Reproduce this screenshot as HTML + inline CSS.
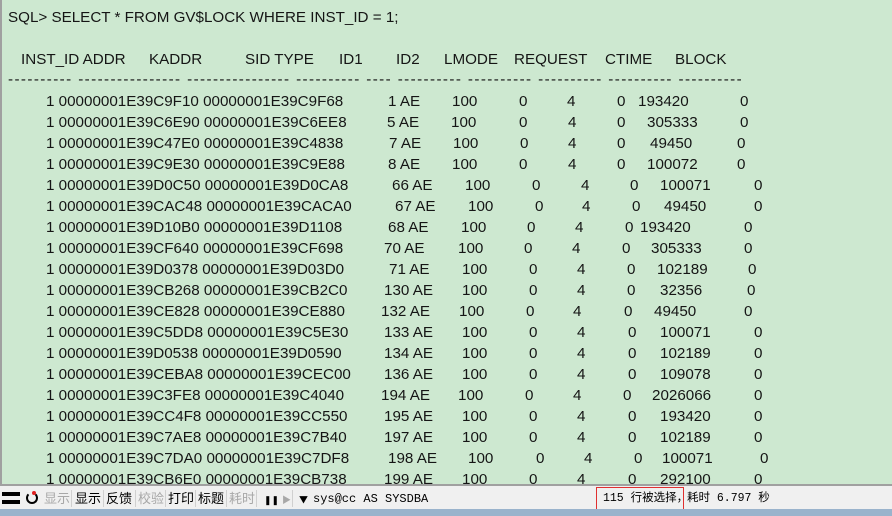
<!DOCTYPE html>
<html><head><meta charset="utf-8"><style>
*{margin:0;padding:0}
body{width:892px;height:516px;overflow:hidden;background:#f0f0f0;position:relative;font-family:"Liberation Sans","Noto Sans CJK SC",sans-serif}
#main{position:absolute;left:0;top:0;width:892px;height:486px;background:#cde8d0;border-left:2px solid #a0a0a0;border-bottom:2px solid #a0a0a0;box-sizing:border-box;overflow:hidden}
.t{position:absolute;font-size:15.2px;color:#151515;white-space:pre;line-height:18px}
#bar{position:absolute;left:0;top:487px;width:892px;height:22px;background:#f0f0f0;font-size:13px;font-family:"Noto Sans CJK SC",sans-serif}
#bar span{position:absolute;top:3px;line-height:16px;white-space:pre}
.g{color:#a8a8a8}
.sep{position:absolute;top:3px;width:1px;height:17px;background:#d0d0d0}
.mono{font-family:"Liberation Mono","Noto Sans CJK SC",monospace;font-size:12px}
#blue{position:absolute;left:0;top:509px;width:892px;height:7px;background:#9ab3cc}
</style></head><body>
<div id="main"></div>
<div id="bar">
 <div style="position:absolute;left:2px;top:5px;width:18px;height:4px;background:#000"></div>
 <div style="position:absolute;left:2px;top:13px;width:18px;height:4px;background:#000"></div>
 <div style="position:absolute;left:26px;top:5px;width:8px;height:8px;border:2px solid #000;border-radius:50%;border-top-color:transparent"></div>
 <div style="position:absolute;left:32px;top:4px;width:4px;height:4px;background:#e02020;border-radius:50%"></div>
 <span class="g" style="left:44px">显示</span>
 <div class="sep" style="left:71px"></div>
 <span style="left:75px">显示</span>
 <div class="sep" style="left:103px"></div>
 <span style="left:106px">反馈</span>
 <div class="sep" style="left:135px"></div>
 <span class="g" style="left:138px">校验</span>
 <div class="sep" style="left:165px"></div>
 <span style="left:168px">打印</span>
 <div class="sep" style="left:195px"></div>
 <span style="left:198px">标题</span>
 <div class="sep" style="left:226px"></div>
 <span class="g" style="left:229px">耗时</span>
 <div class="sep" style="left:256px"></div>
 <span style="left:264px;font-size:9px;top:5px">❚❚</span>
 <span class="g" style="left:282px;font-size:9px;top:5px">▶</span>
 <div class="sep" style="left:292px"></div>
 <span style="left:299px;font-size:9px;top:5px">▼</span>
 <span class="mono" style="left:313px;top:4px">sys@cc AS SYSDBA</span>
 <div style="position:absolute;left:596px;top:0;width:88px;height:25px;border:1px solid #e03030;box-sizing:border-box"></div>
 <span class="mono" style="left:603px;top:4px;font-size:11.5px">115 行被选择，</span>
 <span class="mono" style="left:687px;top:4px;font-size:11.5px">耗时 6.797 秒</span>
</div>
<div id="blue"></div>
<script>
var m=document.getElementById('main');
function T(x,y,s,ls){var d=document.createElement('div');d.className='t';d.style.left=x+'px';d.style.top=(y-7)+'px';d.textContent=s;if(ls)d.style.letterSpacing=ls;m.appendChild(d);return d;}
T(6,16,'SQL> SELECT * FROM GV$LOCK WHERE INST_ID = 1;');
[[19,'INST_ID ADDR'],[147,'KADDR'],[243,'SID TYPE'],[337,'ID1'],[394,'ID2'],[442,'LMODE'],[512,'REQUEST'],[603,'CTIME'],[673,'BLOCK']].forEach(function(a){T(a[0],58,a[1]);});
T(6,78,'---------- ---------------- ---------------- ---------- ---- ---------- ---------- ---------- ---------- ----------','1.4px');
var R=[
['00000001E39C9F10','00000001E39C9F68','1 AE',386,450,517,565,615,'193420',636,738],
['00000001E39C6E90','00000001E39C6EE8','5 AE',385,449,517,566,615,'305333',645,738],
['00000001E39C47E0','00000001E39C4838','7 AE',387,451,518,566,615,'49450',648,735],
['00000001E39C9E30','00000001E39C9E88','8 AE',386,450,517,566,615,'100072',645,735],
['00000001E39D0C50','00000001E39D0CA8','66 AE',390,463,530,579,628,'100071',658,752],
['00000001E39CAC48','00000001E39CACA0','67 AE',393,466,533,580,630,'49450',662,752],
['00000001E39D10B0','00000001E39D1108','68 AE',386,459,525,573,623,'193420',638,742],
['00000001E39CF640','00000001E39CF698','70 AE',382,456,522,570,620,'305333',649,742],
['00000001E39D0378','00000001E39D03D0','71 AE',387,460,527,575,625,'102189',655,746],
['00000001E39CB268','00000001E39CB2C0','130 AE',382,460,527,575,625,'32356',658,745],
['00000001E39CE828','00000001E39CE880','132 AE',379,457,524,571,622,'49450',652,742],
['00000001E39C5DD8','00000001E39C5E30','133 AE',382,460,527,575,626,'100071',658,752],
['00000001E39D0538','00000001E39D0590','134 AE',382,460,527,575,626,'102189',658,752],
['00000001E39CEBA8','00000001E39CEC00','136 AE',382,460,527,575,626,'109078',658,752],
['00000001E39C3FE8','00000001E39C4040','194 AE',379,456,523,571,621,'2026066',650,752],
['00000001E39CC4F8','00000001E39CC550','195 AE',382,460,527,575,626,'193420',658,752],
['00000001E39C7AE8','00000001E39C7B40','197 AE',382,460,527,575,626,'102189',658,752],
['00000001E39C7DA0','00000001E39C7DF8','198 AE',386,466,534,582,632,'100071',660,758],
['00000001E39CB6E0','00000001E39CB738','199 AE',382,460,527,575,626,'292100',658,752]];
R.forEach(function(r,i){var y=100+21*i;
T(44,y,'1 '+r[0]+' '+r[1]);T(r[3],y,r[2]);T(r[4],y,'100');T(r[5],y,'0');T(r[6],y,'4');T(r[7],y,'0');T(r[9],y,r[8]);T(r[10],y,'0');});
</script>
</body></html>
